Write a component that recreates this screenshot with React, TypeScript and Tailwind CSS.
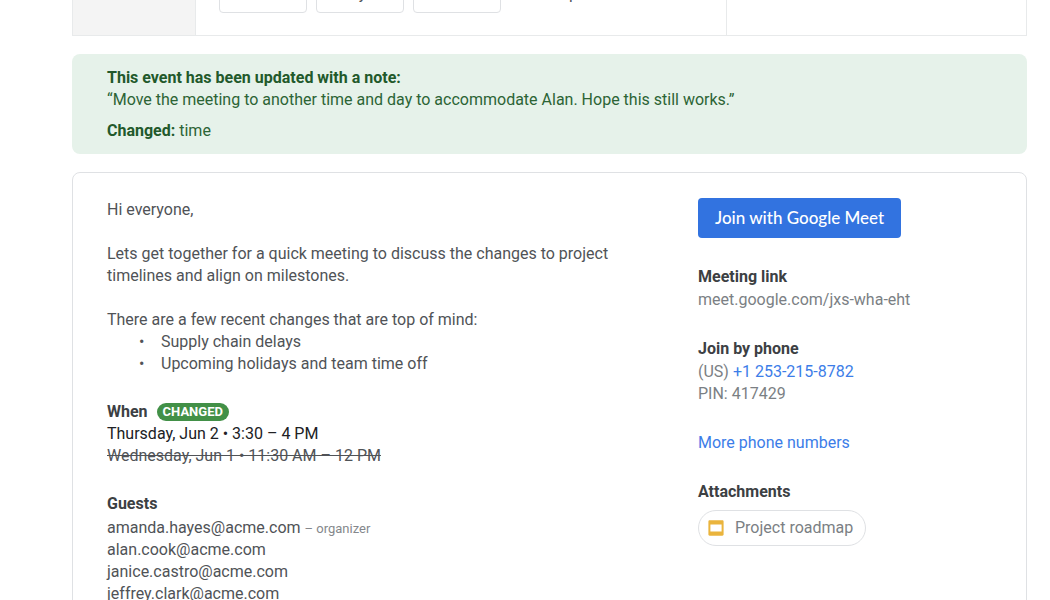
const replies = ["Yes", "Maybe", "No"];

const guests = [
    "alan.cook@acme.com",
    "janice.castro@acme.com",
    "jeffrey.clark@acme.com",
];

const EventSummary = () => {
    return (
        <header className="flex h-9 shrink-0 items-end overflow-hidden border-x border-b border-[#e8eaeb]">
            <div className="h-20 w-[123px] shrink-0 border-r border-[#e8eaeb] bg-[#f4f4f4]"></div>
            <div className="flex h-20 flex-1 items-end gap-[9px] border-r border-[#e8eaeb] pb-[22px] pl-[23px]">
                {replies.map((reply) => (
                    <button key={reply} type="button" className="h-[38px] w-[88px] rounded border border-[#dfe1e4]">
                        {reply}
                    </button>
                ))}
                <button type="button" className="h-[38px] px-[9px]">More options</button>
            </div>
            <div className="h-20 w-[299px] shrink-0"></div>
        </header>
    )
}

const UpdateNote = () => {
    return (
        <section className="shrink-0 rounded-lg bg-[#e6f2ea] px-[35px] pt-[13px] pb-3 text-[#2c6435]">
            <h2 className="font-bold text-[#22592b]">This event has been updated with a note:</h2>
            <p>“Move the meeting to another time and day to accommodate Alan. Hope this still works.”</p>
            <p className="mt-[9px]"><b className="text-[#22592b]">Changed:</b> time</p>
        </section>
    )
}

const SlidesIcon = () => {
    return (
        <svg width="16" height="16" viewBox="0 0 16 16" aria-hidden="true">
            <path
                fill="#eab43c"
                fillRule="evenodd"
                d="M1.6 0.3h12.8c.7 0 1.2.5 1.2 1.2v13c0 .7-.5 1.2-1.2 1.2H1.6c-.7 0-1.2-.5-1.2-1.2v-13C.4.8.9.3 1.6.3zM2.4 4.4v7.2h11.2V4.4z"
            />
        </svg>
    )
}

const Details = () => {
    return (
        <div className="flex-1 pt-px">
            <div className="flex max-w-[520px] flex-col gap-[22px]">
                <p>Hi everyone,</p>
                <p>Lets get together for a quick meeting to discuss the changes to project timelines and align on milestones.</p>
                <div>
                    <p>There are a few recent changes that are top of mind:</p>
                    <ul>
                        <li className="flex pl-8"><span className="w-[22px]">•</span>Supply chain delays</li>
                        <li className="flex pl-8"><span className="w-[22px]">•</span>Upcoming holidays and team time off</li>
                    </ul>
                </div>
            </div>
            <section className="mt-[26px]">
                <div className="flex items-center gap-[9px]">
                    <h3 className="font-bold text-[#3c4043]">When</h3>
                    <span className="rounded-full bg-[#429047] px-[6px] text-[13px] leading-[18px] font-bold text-white">CHANGED</span>
                </div>
                <p className="text-[#202124]">Thursday, Jun 2 • 3:30 – 4 PM</p>
                <p><s>Wednesday, Jun 1 • 11:30 AM – 12 PM</s></p>
            </section>
            <section className="mt-[26px]">
                <h3 className="mb-[2px] font-bold text-[#3c4043]">Guests</h3>
                <ul>
                    <li>amanda.hayes@acme.com <span className="text-[13px] leading-[18px] text-[#85888c]">– organizer</span></li>
                    {guests.map((guest) => (
                        <li key={guest}>{guest}</li>
                    ))}
                </ul>
            </section>
        </div>
    )
}

const JoinInfo = () => {
    return (
        <aside className="flex w-[294px] shrink-0 flex-col items-start gap-[27px] text-[#7b7f84]">
            <button type="button" className="mb-px h-10 rounded bg-[#3273e0] px-[17px] font-['Lato',sans-serif] text-[17px] font-medium text-white">
                Join with Google Meet
            </button>
            <section>
                <h3 className="mb-px font-bold text-[#3c4043]">Meeting link</h3>
                <a href="#meet">meet.google.com/jxs-wha-eht</a>
            </section>
            <section>
                <h3 className="mb-px font-bold text-[#3c4043]">Join by phone</h3>
                <p>(US) <a href="#call" className="text-[#3c7de8]">+1 253-215-8782</a></p>
                <p>PIN: 417429</p>
            </section>
            <a href="#numbers" className="text-[#3c7de8]">More phone numbers</a>
            <section>
                <h3 className="mb-[7px] font-bold text-[#3c4043]">Attachments</h3>
                <a href="#roadmap" className="flex h-9 items-center gap-[11px] rounded-full border border-[#dfe1e4] pr-3 pl-[9px]">
                    <SlidesIcon />
                    Project roadmap
                </a>
            </section>
        </aside>
    )
}

const App = () => {
    return (
        <main className="flex h-screen flex-col gap-[18px] overflow-hidden bg-white pr-[23px] pl-[72px] font-['Roboto',sans-serif] text-base leading-[22px] text-[#505357]">
            <EventSummary />
            <UpdateNote />
            <div className="flex shrink-0 rounded-lg border border-[#dfe1e4] px-[34px] pt-[25px] pb-9">
                <Details />
                <JoinInfo />
            </div>
        </main>
    )
}

export default App;
